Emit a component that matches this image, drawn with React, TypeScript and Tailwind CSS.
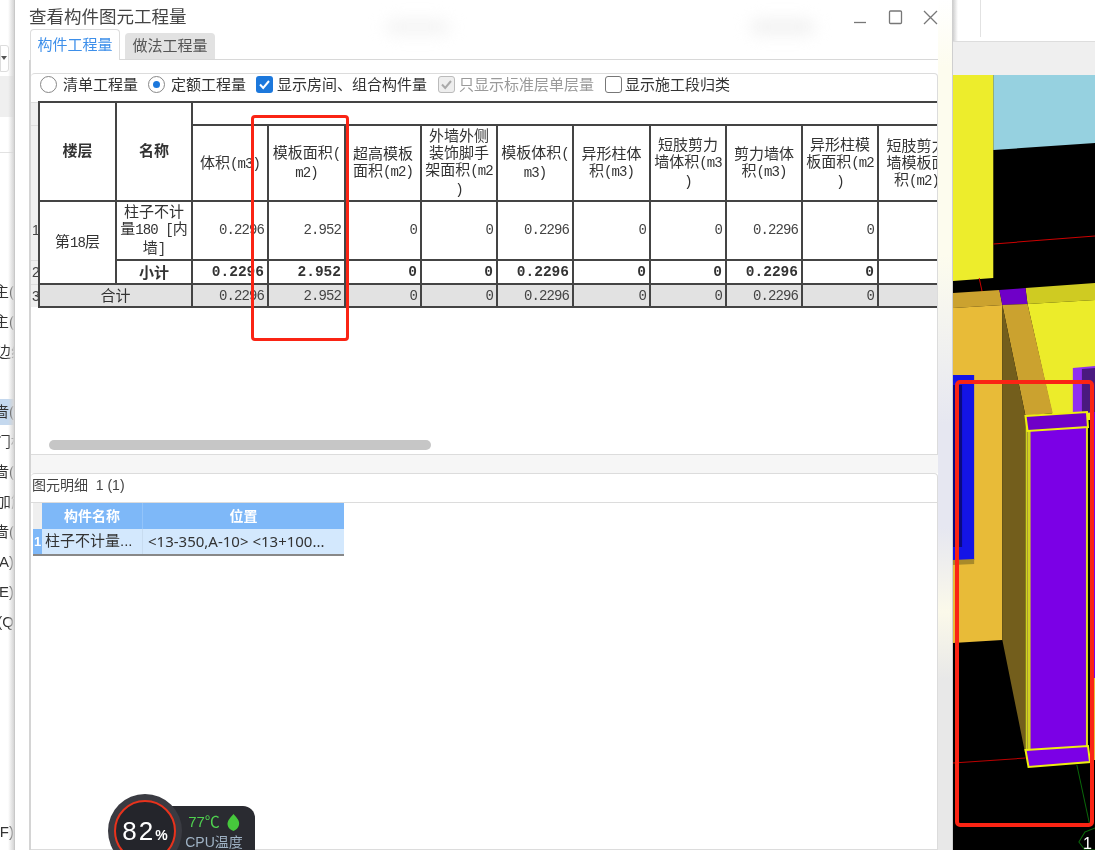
import React from "react";

const CJK = '"Liberation Sans","Noto Sans CJK SC",sans-serif';

function M({ children }: { children: React.ReactNode }) {
  return <span className="font-['Liberation_Mono',monospace] text-[14px] tracking-[-0.9px]">{children}</span>;
}

function Label({ children, muted }: { children: React.ReactNode; muted?: boolean }) {
  return <span className={`text-[15px] leading-[20px] whitespace-nowrap ${muted ? "text-[#9a9a9a]" : "text-[#333]"}`}>{children}</span>;
}

function Check({ state }: { state: "on" | "off" | "disabled" }) {
  if (state === "off") return <span className="w-[17px] h-[17px] rounded-[3px] border border-[#777] bg-white block" />;
  const disabled = state === "disabled";
  return (
    <span className={`w-[17px] h-[17px] rounded-[3px] flex items-center justify-center ${disabled ? "bg-[#eee] border border-[#bbb]" : "bg-[#1c78dc]"}`}>
      <svg width="13" height="13" viewBox="0 0 13 13" fill="none">
        <path d="M2 6.5l3.2 3.4L11 3" stroke={disabled ? "#aaa" : "#fff"} strokeWidth="2" />
      </svg>
    </span>
  );
}

const heads: React.ReactNode[] = [
  <>体积<M>(m3)</M></>,
  <>模板面积<M>(</M><br /><M>m2)</M></>,
  <>超高模板<br />面积<M>(m2)</M></>,
  <>外墙外侧<br />装饰脚手<br />架面积<M>(m2</M><br /><M>)</M></>,
  <>模板体积<M>(</M><br /><M>m3)</M></>,
  <>异形柱体<br />积<M>(m3)</M></>,
  <>短肢剪力<br />墙体积<M>(m3</M><br /><M>)</M></>,
  <>剪力墙体<br />积<M>(m3)</M></>,
  <>异形柱模<br />板面积<M>(m2</M><br /><M>)</M></>,
  <>短肢剪力<br />墙模板面<br />积<M>(m2)</M></>,
];
const vals = ["0.2296", "2.952", "0", "0", "0.2296", "0", "0", "0.2296", "0", ""];
const widths = [8, 77, 76, 76, 77, 76, 76, 76, 77, 76, 76, 76, 77];
const bd = "border-2 border-[#444]";
const num = "font-['Liberation_Mono',monospace] text-[14px] tracking-[-0.9px] text-[#444]";

function QtyTable() {
  return (
    <div className="overflow-hidden w-[906px] relative">
      <table className="table-fixed border-collapse text-[#333] w-[924px]">
        <colgroup>
          {widths.map((w, i) => <col key={i} style={{ width: w }} />)}
        </colgroup>
        <tbody>
          <tr className="h-[23px]">
            <td className="bg-[#efefef] border-t border-[#ddd]" />
            <td rowSpan={2} className={`${bd} text-center font-bold text-[15px]`}>楼层</td>
            <td rowSpan={2} className={`${bd} text-center font-bold text-[15px]`}>名称</td>
            <td colSpan={10} className={bd} />
          </tr>
          <tr className="h-[76px]">
            <td className="bg-[#efefef] border-t border-[#ddd]" />
            {heads.map((h, i) => (
              <td key={i} className={`${bd} text-center text-[15px] leading-[17px] whitespace-nowrap overflow-hidden`}>{h}</td>
            ))}
          </tr>
          <tr className="h-[59px]">
            <td className="bg-[#efefef] text-[14px] text-[#444] overflow-hidden pl-px">1</td>
            <td rowSpan={2} className={`${bd} text-center text-[15px]`}>第<M>18</M>层</td>
            <td className={`${bd} text-center text-[15px] leading-[17px] whitespace-nowrap`}>柱子不计<br />量<M>180 [</M>内<br />墙<M>]</M></td>
            {vals.map((v, i) => (
              <td key={i} className={`${bd} text-right pr-[3px] ${num}`}>{v}</td>
            ))}
          </tr>
          <tr className="h-[24px] leading-none">
            <td className="bg-[#efefef] text-[14px] text-[#444] overflow-hidden border-t border-[#ddd] pl-px">2</td>
            <td className={`${bd} text-center text-[15px] font-bold`}>小计</td>
            {vals.map((v, i) => (
              <td key={i} className={`${bd} text-right pr-[3px] font-['Liberation_Mono',monospace] text-[14.5px] font-bold`}>{v}</td>
            ))}
          </tr>
          <tr className="h-[23px] bg-[#e2e2e2] leading-none">
            <td className="bg-[#efefef] text-[14px] text-[#444] overflow-hidden border-t border-[#ddd] pl-px">3</td>
            <td colSpan={2} className={`${bd} text-center text-[15px]`}>合计</td>
            {vals.map((v, i) => (
              <td key={i} className={`${bd} text-right pr-[3px] ${num}`}>{v}</td>
            ))}
          </tr>
        </tbody>
      </table>
    </div>
  );
}

function SideRow({ text, hi, shift }: { text?: string; hi?: boolean; shift?: boolean }) {
  return (
    <div className="h-[30px] flex items-center">
      <div className={`w-full h-[26px] flex items-center ${shift ? "justify-start" : "justify-end"} text-[15px] text-[#333] whitespace-nowrap overflow-hidden ${hi ? "bg-[#c4d8ee]" : ""}`}>
        <span className={shift ? "-ml-[4px] shrink-0" : "shrink-0"}>{text}</span>
      </div>
    </div>
  );
}

function Sidebar() {
  return (
    <div className="w-[15px] shrink-0 relative bg-white border-r border-[#c8c8c8] overflow-hidden">
      <div className="pt-[45px]">
        <div className="w-[9px] h-[27px] border border-[#ddd] rounded-r-[3px]">
          <div className="mt-[10px] w-0 h-0 border-x-[3px] border-x-transparent border-t-[4px] border-t-[#555]" />
        </div>
        <div className="mt-[4px] h-[41px] bg-[#efefef]" />
        <div className="mt-[35px] h-px bg-[#e2e2e2]" />
        <div className="h-[124px]" />
        <SideRow text="主(" />
        <SideRow text="主(" />
        <SideRow text="边线" shift />
        <SideRow />
        <SideRow text="啬(" hi />
        <SideRow text="门框" shift />
        <SideRow text="啬(" />
        <SideRow text="加筋" shift />
        <SideRow text="啬(" />
        <SideRow text="A)" />
        <SideRow text="E)" />
        <SideRow text="(Q" />
        <div className="h-[180px]" />
        <SideRow text="F)" />
      </div>
      <div className="absolute inset-y-0 right-0 w-[6px] bg-gradient-to-r from-transparent to-[#d5d5d5]" />
    </div>
  );
}

function Dialog() {
  return (
    <div className="w-[938px] shrink-0 bg-white flex flex-col relative">
      <div className="h-[29px] flex items-center pl-[14px] pt-[6px] relative">
        <span className="text-[17.5px] text-[#444] whitespace-nowrap">查看构件图元工程量</span>
        <div className="absolute left-[370px] top-[20px] w-[65px] h-[14px] bg-[#f3f3f3] blur-sm rounded-full" />
        <div className="absolute left-[735px] top-[20px] w-[65px] h-[14px] bg-[#f0f0f0] blur-sm rounded-full" />
        <svg className="absolute left-[838px] top-[8px]" width="90" height="18" viewBox="0 0 90 18" fill="none" stroke="#777" strokeWidth="1.3">
          <path d="M1 14.5h12" />
          <rect x="36.5" y="3" width="12" height="12.5" rx="1" />
          <path d="M71 3l13 13M84 3L71 16" />
        </svg>
      </div>

      <div className="h-[31px] ml-[15px] mr-[15px] flex items-end border-b border-[#d8d8d8] gap-[5px]">
        <div className="w-[90px] h-[31px] -mb-px bg-white border border-b-0 border-[#dcdcdc] rounded-t-[4px] flex items-center justify-center text-[15px] text-[#3d8fea]">构件工程量</div>
        <div className="w-[90px] h-[26px] bg-[#e2e2e2] rounded-t-[4px] flex items-center justify-center text-[15px] text-[#555]">做法工程量</div>
      </div>

      <div className="flex-1 ml-[14px] mr-[15px] border-l-2 border-[#d4d4d4] flex flex-col pt-[13px] min-h-0">
        <div className="h-[382px] border border-l-0 border-[#dcdcdc] rounded-t-[4px] flex flex-col shrink-0">
          <div className="h-[27px] flex items-center pl-[9px] pb-[6px] shrink-0">
            <span className="w-[17px] h-[17px] rounded-full border border-[#888] bg-white" />
            <span className="ml-[6px]"><Label>清单工程量</Label></span>
            <span className="ml-[10px] w-[17px] h-[17px] rounded-full border border-[#888] flex items-center justify-center">
              <span className="w-[7px] h-[7px] rounded-full bg-[#1c78dc]" />
            </span>
            <span className="ml-[6px]"><Label>定额工程量</Label></span>
            <span className="ml-[10px]"><Check state="on" /></span>
            <span className="ml-[4px]"><Label>显示房间、组合构件量</Label></span>
            <span className="ml-[11px]"><Check state="disabled" /></span>
            <span className="ml-[4px]"><Label muted>只显示标准层单层量</Label></span>
            <span className="ml-[11px]"><Check state="off" /></span>
            <span className="ml-[3px]"><Label>显示施工段归类</Label></span>
          </div>
          <QtyTable />
          <div className="flex-1" />
          <div className="h-[10px] mb-[4px] ml-[18px] w-[382px] rounded-full bg-[#c6c6c6]" />
        </div>
        <div className="h-[18px] shrink-0 bg-[#f6f6f6]" />
        <div className="flex-1 border border-l-0 border-[#dcdcdc] rounded-t-[4px] bg-white min-h-0">
          <div className="h-[29px] flex items-center pl-[1px] pb-[6px] border-b border-[#dcdcdc] text-[14px] text-[#444] whitespace-nowrap">
            图元明细&nbsp;&nbsp;1 (1)
          </div>
          <div className="ml-[2px] w-[311px] grid grid-cols-[9px_101px_201px] grid-rows-[26px_25px] border-r-2 border-b-2 border-[#888] text-[15px]">
            <div className="bg-[#efefef]" />
            <div className="bg-[#7eb8f8] text-white font-bold text-[14px] flex items-center justify-center border-r border-[#93c4fa]">构件名称</div>
            <div className="bg-[#7eb8f8] text-white font-bold text-[14px] flex items-center justify-center">位置</div>
            <div className="bg-[#7eb8f8] text-white font-bold text-[13px] flex items-center justify-center">1</div>
            <div className="bg-[#d3e8fd] text-[#333] flex items-center pl-[3px] border-r border-[#c8dcf0] whitespace-nowrap">柱子不计量...</div>
            <div className="bg-[#d3e8fd] text-[#333] flex items-center pl-[5px] font-['Noto_Sans',sans-serif] text-[15px] whitespace-nowrap overflow-hidden">&lt;13-350,A-10&gt; &lt;13+100...</div>
          </div>
        </div>
      </div>
      <div className="absolute top-0 bottom-0 right-0 w-[15px] bg-[linear-gradient(180deg,#ffffff_0%,#fdfcee_8%,#fdfcee_30%,#e6e7f1_50%,#e6e7f1_62%,#fbf9ea_72%,#e8e8e8_80%,#e8e8e8_100%)] border-r border-[#cfcfcf]" />
    </div>
  );
}

function Scene() {
  return (
    <svg className="flex-1 w-full block" viewBox="954 75 141 775" preserveAspectRatio="none">
      <rect x="954" y="75" width="141" height="775" fill="#000" />
      <polygon points="994,75 1095,75 1095,143 994,150" fill="#96d1e0" />
      <polygon points="954,75 994,75 994,278 954,281" fill="#eded2c" />
      <line x1="994" y1="244" x2="1095" y2="236" stroke="#c00" strokeWidth="1" />
      <line x1="980" y1="278" x2="983" y2="292" stroke="#c00" strokeWidth="1" />
      <polygon points="1026,288 1095,283 1095,300 1028,304" fill="#cfcb22" />
      <polygon points="1028,304 1095,300 1095,420 1054,420" fill="#ecec2a" />
      <polygon points="954,293 1000,290 1003,305 954,308" fill="#cba22f" />
      <polygon points="1000,290 1026,288 1028,304 1003,305" fill="#6f00c8" />
      <polygon points="954,308 1003,305 1003,640 954,643" fill="#e8bb38" />
      <polygon points="1003,305 1028,304 1053,413 1026,416" fill="#cba22f" />
      <polygon points="1003,305 1026,416 1026,755 1024,745 1003,640" fill="#735e1c" />
      <rect x="954" y="375" width="21" height="185" fill="#1414e6" />
      <rect x="954" y="385" width="9" height="162" fill="#0a0a80" />
      <polygon points="954,560 975,559 975,564 954,565" fill="#a88a2a" />
      <polygon points="1073,368 1095,366 1095,412 1073,414" fill="#9030f0" />
      <polygon points="1082,369 1095,368 1095,412 1082,413" fill="#4a1a80" />
      <rect x="1092" y="412" width="3" height="266" fill="#7b00e6" />
      <rect x="1092" y="678" width="3" height="82" fill="#e8bb38" />
      <line x1="954" y1="763" x2="1026" y2="758" stroke="#b00" strokeWidth="1" />
      <line x1="1077" y1="765" x2="1090" y2="826" stroke="#0a6a0a" strokeWidth="1" />
      <polygon points="1028,431 1088,427 1088,746 1028,750" fill="#7b00e6" />
      <polygon points="1026,418 1028,431 1028,750 1026,750" fill="#d0d020" />
      <line x1="1029.5" y1="431" x2="1029.5" y2="750" stroke="#d0d020" strokeWidth="3" />
      <line x1="1087" y1="427" x2="1087" y2="746" stroke="#dcdc20" strokeWidth="2" />
      <polygon points="1026,416 1087,412 1088,427 1028,431" fill="#6f00c8" stroke="#eeee10" strokeWidth="2" />
      <polygon points="1026,750 1088,746 1090,762 1029,767" fill="#7b00e6" stroke="#eeee10" strokeWidth="2" />
      <polygon points="1085,832 1095,828 1103,832 1103,850 1085,850 1079,842" fill="none" stroke="#0a6a0a" strokeWidth="1" />
      <text x="1083" y="849" fill="#fff" fontSize="16" fontFamily="Liberation Sans">1</text>
    </svg>
  );
}

function Monitor() {
  return (
    <div className="absolute left-[108px] top-[794px] w-[148px] h-[76px]">
      <div className="absolute left-[37px] top-[12px] w-[110px] h-[64px] rounded-[12px] bg-[#2a2b31] text-center pl-[28px] pt-[7px]">
        <div className="flex items-center justify-center gap-[7px] text-[15px] leading-[18px] text-[#4fd14f]">
          77℃
          <svg width="13" height="17" viewBox="0 0 13 17"><path d="M6.5 0C10 4 13 7 12 11c-.6 3-3 5-5.5 6C3.5 16 1 14 .6 11 0 7 3 4 6.5 0z" fill="#46c83c" /></svg>
        </div>
        <div className="text-[14px] leading-[22px] text-[#9fb2c4] whitespace-nowrap">CPU温度</div>
      </div>
      <div className="absolute left-0 top-0 w-[74px] h-[74px] rounded-full bg-[#3a3b42] flex items-center justify-center">
        <div className="w-[62px] h-[62px] rounded-full border-2 border-[#e8321c] bg-[#24252b] flex items-center justify-center text-white text-[26px] leading-none tracking-[2px]">
          82<span className="text-[14px] font-bold mt-[8px] tracking-normal">%</span>
        </div>
      </div>
    </div>
  );
}

export default function App() {
  return (
    <div className="relative w-[1095px] h-[850px] overflow-hidden bg-white flex blur-[0.4px]" style={{ fontFamily: CJK }}>
      <Sidebar />
      <Dialog />
      <div className="flex-1 flex flex-col min-w-0 relative">
        <div className="h-[42px] bg-white border-b border-[#ddd] shrink-0 relative">
          <div className="absolute left-[27px] top-0 h-[37px] w-px bg-[#e2e2e2]" />
          <div className="absolute left-0 top-0 h-full w-[5px] bg-gradient-to-r from-[#d0d0d0] to-transparent" />
        </div>
        <div className="h-[33px] bg-[#efefef] shrink-0" />
        <Scene />
      </div>
      <div className="absolute left-[251px] top-[115px] w-[98px] h-[226px] border-[3px] border-[#fa2414] rounded-[4px]" />
      <div className="absolute left-[955px] top-[380px] w-[139px] h-[447px] border-[4px] border-[#fa2414] rounded-[5px]" />
      <Monitor />
    </div>
  );
}
